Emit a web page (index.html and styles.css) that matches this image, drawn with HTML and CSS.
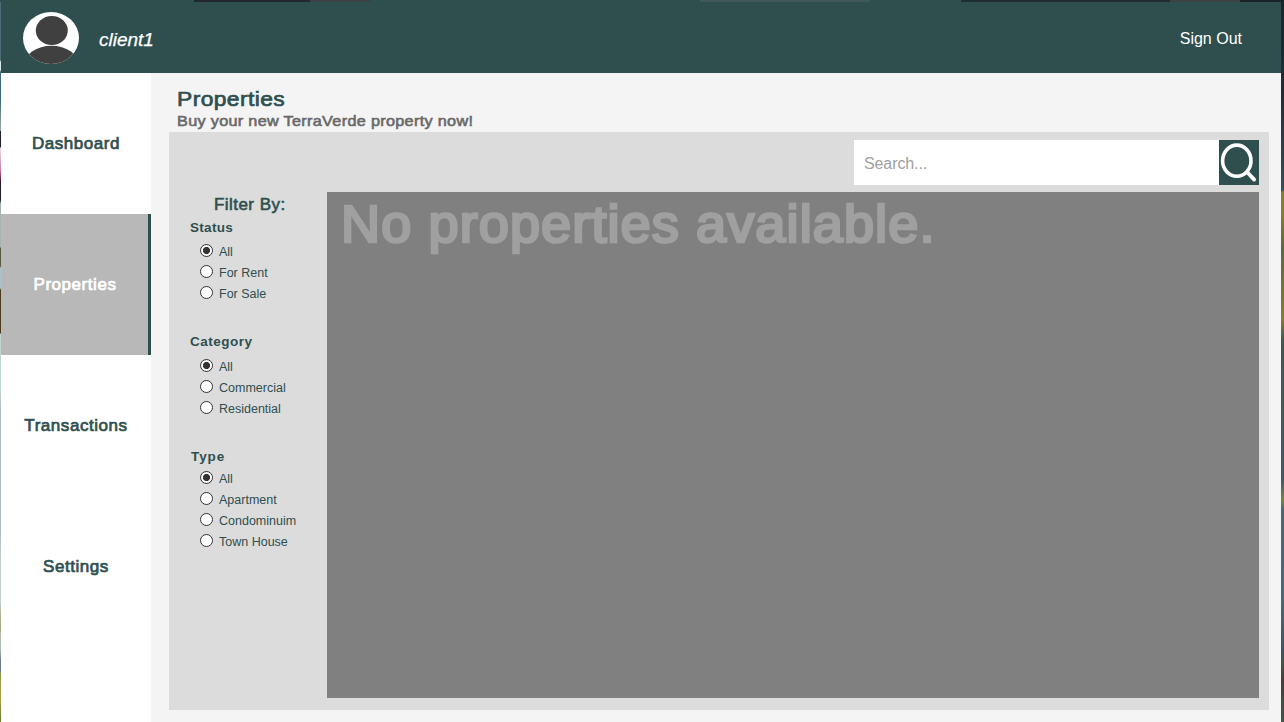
FILE: index.html
```html
<!DOCTYPE html>
<html lang="en">
<head>
<meta charset="utf-8">
<title>Properties</title>
<link rel="stylesheet" href="styles.css">
</head>
<body>
<div class="window">
  <header class="topbar">
    <svg class="avatar" width="56" height="52" viewBox="0 0 56 52">
      <clipPath id="face"><ellipse cx="28" cy="26" rx="28" ry="26"/></clipPath>
      <g clip-path="url(#face)">
        <rect width="56" height="52" fill="#fff"/>
        <ellipse cx="28.8" cy="18.5" rx="16" ry="14.6" fill="#404040"/>
        <ellipse cx="28.5" cy="52.5" rx="27" ry="18.8" fill="#404040"/>
      </g>
    </svg>
    <span class="user">client1</span>
    <a class="signout">Sign Out</a>
  </header>
  <div class="body">
    <nav class="sidebar">
      <a class="nav-item">Dashboard</a>
      <a class="nav-item active">Properties</a>
      <a class="nav-item">Transactions</a>
      <a class="nav-item">Settings</a>
    </nav>
    <main class="main">
      <h1 class="title">Properties</h1>
      <p class="subtitle">Buy your new TerraVerde property now!</p>
      <section class="panel">
        <div class="search">
          <div class="search-input">Search...</div>
          <div class="search-button">
            <svg width="40" height="45" viewBox="0 0 40 45" fill="none" stroke="#fff" stroke-linecap="round">
              <ellipse cx="17.8" cy="20.7" rx="14.2" ry="15.6" stroke-width="3.6"/>
              <path d="M28.5 32.5L35.2 39.6" stroke-width="3.8"/>
            </svg>
          </div>
        </div>
        <div class="content">
          <aside class="filters">
            <h2 class="filter-title">Filter By:</h2>
            <div class="group status">
              <h3>Status</h3>
              <label><i class="radio on"></i><span>All</span></label>
              <label><i class="radio"></i><span>For Rent</span></label>
              <label><i class="radio"></i><span>For Sale</span></label>
            </div>
            <div class="group category">
              <h3>Category</h3>
              <label><i class="radio on"></i><span>All</span></label>
              <label><i class="radio"></i><span>Commercial</span></label>
              <label><i class="radio"></i><span>Residential</span></label>
            </div>
            <div class="group type">
              <h3>Type</h3>
              <label><i class="radio on"></i><span>All</span></label>
              <label><i class="radio"></i><span>Apartment</span></label>
              <label><i class="radio"></i><span>Condominuim</span></label>
              <label><i class="radio"></i><span>Town House</span></label>
            </div>
          </aside>
          <div class="results"><span class="empty">No properties available.</span></div>
        </div>
      </section>
    </main>
  </div>
</div>
</body>
</html>
```
FILE: styles.css
```css
* { box-sizing: border-box; margin: 0; padding: 0; }
body {
  width: 1284px; height: 722px; overflow: hidden;
  padding: 2px 3px 0 1px;
  font-family: "Liberation Sans", Arial, sans-serif;
  color: #2f4f4f;
  background:
    linear-gradient(90deg, #2f4f4f 0 194px, #24272d 194px 310px, #3b4144 310px 370px, #2f4f4f 370px 700px, #41585a 700px 870px, #2f4f4f 870px 961px, #202b34 961px 1170px, #3d4242 1170px 1240px, #1c222a 1240px) 0 0 / 1284px 2px no-repeat,
    linear-gradient(#4d6b75 0 60px, #dfe8e8 62px 70px, #3c6a7a 72px 100px, #8ba1a0 125px 131px, #1e1e2c 131px 147px, #f1dfe8 148px, #c77da3 170px, #50122c 181px, #1c1c2b 184px 200px, #a5b5b5 204px 247px, #55573e 248px 266px, #a9c2c8 268px 288px, #4b3b1c 290px 333px, #c0d5ce 334px 390px, #aebcca 410px 530px, #c3cfca 560px 602px, #b4b899 614px, #9fa178 630px, #b9c1ae 632px, #aebbb5 650px, #68788a 660px 670px, #8e9851 674px, #aa9d42 700px, #6c7a37 720px) 0 0 / 1px 722px no-repeat,
    linear-gradient(#1c222a 0, #202d38 90px, #34505d 190px, #8d7b2c 192px 215px, #5d6a35 250px, #8d7b2c 320px, #3e5b50 340px, #3e5b6a 480px, #788638 500px, #3f6a80 510px, #426b83 600px, #3d5569 650px, #41594b 662px, #493f39 680px, #405947 722px) 1281px 0 / 3px 722px no-repeat;
}
.window { height: 720px; display: flex; flex-direction: column; background: #f4f4f4; }
.topbar { height: 71px; flex: none; display: flex; align-items: flex-start; background: #2f4f4f; color: #fff; padding: 9.5px 39px 0 21.5px; }
.avatar { flex: none; }
.user { margin: 16.5px 0 0 20.5px; font-size: 19px; line-height: 24px; font-style: italic; -webkit-text-stroke: .25px; }
.signout { margin: 15.5px 0 0 auto; font-size: 16px; line-height: 24px; }
.body { flex: 1; display: flex; min-height: 0; }
.sidebar { width: 150px; background: #fff; flex: none; }
.nav-item { height: 141px; display: flex; align-items: center; justify-content: center; font-size: 17px; -webkit-text-stroke: .7px; letter-spacing: .55px; }
.nav-item.active { background: #b8b8b8; color: #fff; border-right: 3px solid #2f4f4f; padding-left: 1px; }
.main { flex: 1; min-width: 0; padding: 13px 12px 0 18px; }
.title { width: fit-content; margin-left: 8px; font-size: 21px; line-height: 26px; font-weight: 400; -webkit-text-stroke: .7px; letter-spacing: .4px; transform: scaleX(1.085); transform-origin: 0 0; }
.subtitle { width: fit-content; margin-left: 8px; height: 20px; font-size: 15px; line-height: 17px; color: #696969; -webkit-text-stroke: .6px; letter-spacing: .3px; transform: scaleX(1.08); transform-origin: 0 0; }
.panel { height: 578px; background: #dcdcdc; padding: 8px 10px 12px 0; }
.search { display: flex; justify-content: flex-end; height: 45px; }
.search-input { width: 365px; background: #fff; color: #a0a0a0; font-size: 16px; line-height: 47px; padding-left: 10px; letter-spacing: -.1px; }
.search-button { width: 40px; background: #2f4f4f; }
.search-button svg { display: block; }
.content { display: flex; margin-top: 7px; height: 506px; }
.filters { width: 158px; flex: none; padding-left: 21px; }
.filter-title { margin-left: 24px; height: 24px; font-size: 17px; line-height: 26px; font-weight: 400; -webkit-text-stroke: .6px; letter-spacing: .45px; }
.group h3 { height: 25px; font-size: 13.5px; line-height: 23px; font-weight: 700; letter-spacing: .3px; }
.group { height: 114px; }
.category { height: 115px; }
.category h3 { height: 26px; letter-spacing: .5px; }
.type h3 { height: 23px; margin-left: 1px; letter-spacing: .9px; margin-right: -1px; }
.group label { display: flex; height: 21px; margin-left: 10px; font-size: 12.5px; line-height: 22px; }
.radio { width: 13px; height: 13px; margin: 3px 6px 0 0; border: 1.2px solid #333; border-radius: 50%; background: #fff; flex: none; }
.radio.on { background: radial-gradient(circle, #333 3.2px, #fff 3.9px); }
.results { flex: 1; background: #808080; padding: 2px 0 0 14px; }
.empty { display: block; width: fit-content; color: #a0a0a0; font-size: 51px; line-height: 62px; font-weight: 400; -webkit-text-stroke: 2.6px #a0a0a0; letter-spacing: 1px; white-space: nowrap; transform: scaleX(1.062); transform-origin: 0 0; }
```
